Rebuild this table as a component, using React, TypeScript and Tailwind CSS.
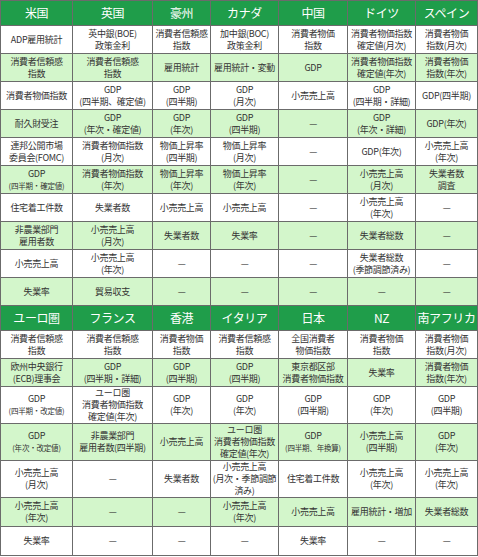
const font = { fontFamily: '"Noto Sans CJK JP", "Noto Sans", sans-serif' };

type Cell = string;

const top = {
  head: ['米国', '英国', '豪州', 'カナダ', '中国', 'ドイツ', 'スペイン'],
  heights: [28, 28, 28, 28, 28, 28, 28, 28, 28, 28],
  rows: [
    ['ADP雇用統計', '英中銀(BOE)\n政策金利', '消費者信頼感\n指数', '加中銀(BOC)\n政策金利', '消費者物価\n指数', '消費者物価指数\n確定値(月次)', '消費者物価\n指数(月次)'],
    ['消費者信頼感\n指数', '消費者信頼感\n指数', '雇用統計', '雇用統計・変動', 'GDP', '消費者物価指数\n確定値(年次)', '消費者物価\n指数(年次)'],
    ['消費者物価指数', 'GDP\n(四半期、確定値)', 'GDP\n(四半期)', 'GDP\n(月次)', '小売売上高', 'GDP\n(四半期・詳細)', 'GDP(四半期)'],
    ['耐久財受注', 'GDP\n(年次・確定値)', 'GDP\n(年次)', 'GDP\n(四半期)', '—', 'GDP\n(年次・詳細)', 'GDP(年次)'],
    ['連邦公開市場\n委員会(FOMC)', '消費者物価指数\n(月次)', '物価上昇率\n(四半期)', '物価上昇率\n(月次)', '—', 'GDP(年次)', '小売売上高\n(年次)'],
    ['GDP\n*(四半期・確定値)', '消費者物価指数\n(年次)', '物価上昇率\n(年次)', '物価上昇率\n(年次)', '—', '小売売上高\n(月次)', '失業者数\n調査'],
    ['住宅着工件数', '失業者数', '小売売上高', '小売売上高', '—', '小売売上高\n(年次)', '—'],
    ['非農業部門\n雇用者数', '小売売上高\n(月次)', '失業者数', '失業率', '—', '失業者総数', '—'],
    ['小売売上高', '小売売上高\n(年次)', '—', '—', '—', '失業者総数\n(季節調節済み)', '—'],
    ['失業率', '貿易収支', '—', '—', '—', '—', '—'],
  ] as Cell[][],
};

const bottom = {
  head: ['ユーロ圏', 'フランス', '香港', 'イタリア', '日本', 'NZ', '南アフリカ'],
  heights: [28, 28, 37, 37, 35, 29, 29],
  rows: [
    ['消費者信頼感\n指数', '消費者信頼感\n指数', '消費者物価\n指数', '消費者信頼感\n指数', '全国消費者\n物価指数', '消費者物価\n指数', '消費者物価\n指数(月次)'],
    ['欧州中央銀行\n(ECB)理事会', 'GDP\n(四半期・詳細)', 'GDP\n(四半期)', 'GDP\n(四半期)', '東京都区部\n消費者物価指数', '失業率', '消費者物価\n指数(年次)'],
    ['GDP\n*(四半期・改定値)', 'ユーロ圏\n消費者物価指数\n確定値(年次)', 'GDP\n(年次)', 'GDP\n(年次)', 'GDP\n(四半期)', 'GDP\n(年次)', 'GDP\n(四半期)'],
    ['GDP\n*(年次・改定値)', '非農業部門\n雇用者数(四半期)', '小売売上高', 'ユーロ圏\n消費者物価指数\n確定値(年次)', 'GDP\n*(四半期、年換算)', '小売売上高\n(四半期)', 'GDP\n(年次)'],
    ['小売売上高\n(月次)', '—', '失業者数', '小売売上高\n(月次・季節調節\n済み)', '住宅着工件数', '小売売上高\n(年次)', '小売売上高\n(年次)'],
    ['小売売上高\n(年次)', '—', '—', '小売売上高\n(年次)', '小売売上高', '雇用統計・増加', '失業者総数'],
    ['失業率', '—', '—', '—', '失業率', '—', '—'],
  ] as Cell[][],
};

const widths = [72, 80, 58, 68, 69, 68, 62];

function CellText({ text }: { text: string }) {
  const lines = text.split('\n');
  return (
    <>
      {lines.map((l, i) =>
        l.startsWith('*') ? (
          <div key={i} className="text-[7.5px] leading-[12px] tracking-[-0.2px]">{l.slice(1)}</div>
        ) : (
          <div key={i}>{l}</div>
        )
      )}
    </>
  );
}

function Section({ data }: { data: typeof top }) {
  return (
    <>
      <tr className="h-[25px] bg-[#1f9d4a]">
        {data.head.map((h) => (
          <th key={h} className="overflow-hidden whitespace-nowrap border border-[#6b6b6b] p-0 text-center text-[12px] leading-[16px] font-normal tracking-[-0.4px] text-white">
            {h}
          </th>
        ))}
      </tr>
      {data.rows.map((row, r) => (
        <tr
          key={r}
          style={{ height: data.heights[r] }}
          className={r % 2 === 1 ? 'bg-[#d3f6cb]' : 'bg-white'}
        >
          {row.map((c, i) => (
            <td key={i} className="overflow-hidden whitespace-nowrap border border-[#6b6b6b] p-0 text-center align-middle text-[9px] leading-[12px] tracking-[-0.3px] text-[#333]">
              <CellText text={c} />
            </td>
          ))}
        </tr>
      ))}
    </>
  );
}

export default function App() {
  return (
    <div className="h-[557px] w-[478px] overflow-hidden bg-white" style={font}>
      <table className="w-[477px] table-fixed border-collapse border border-[#444]">
        <colgroup>
          {widths.map((w, i) => (
            <col key={i} style={{ width: w }} />
          ))}
        </colgroup>
        <tbody>
          <Section data={top} />
          <Section data={bottom} />
        </tbody>
      </table>
    </div>
  );
}
